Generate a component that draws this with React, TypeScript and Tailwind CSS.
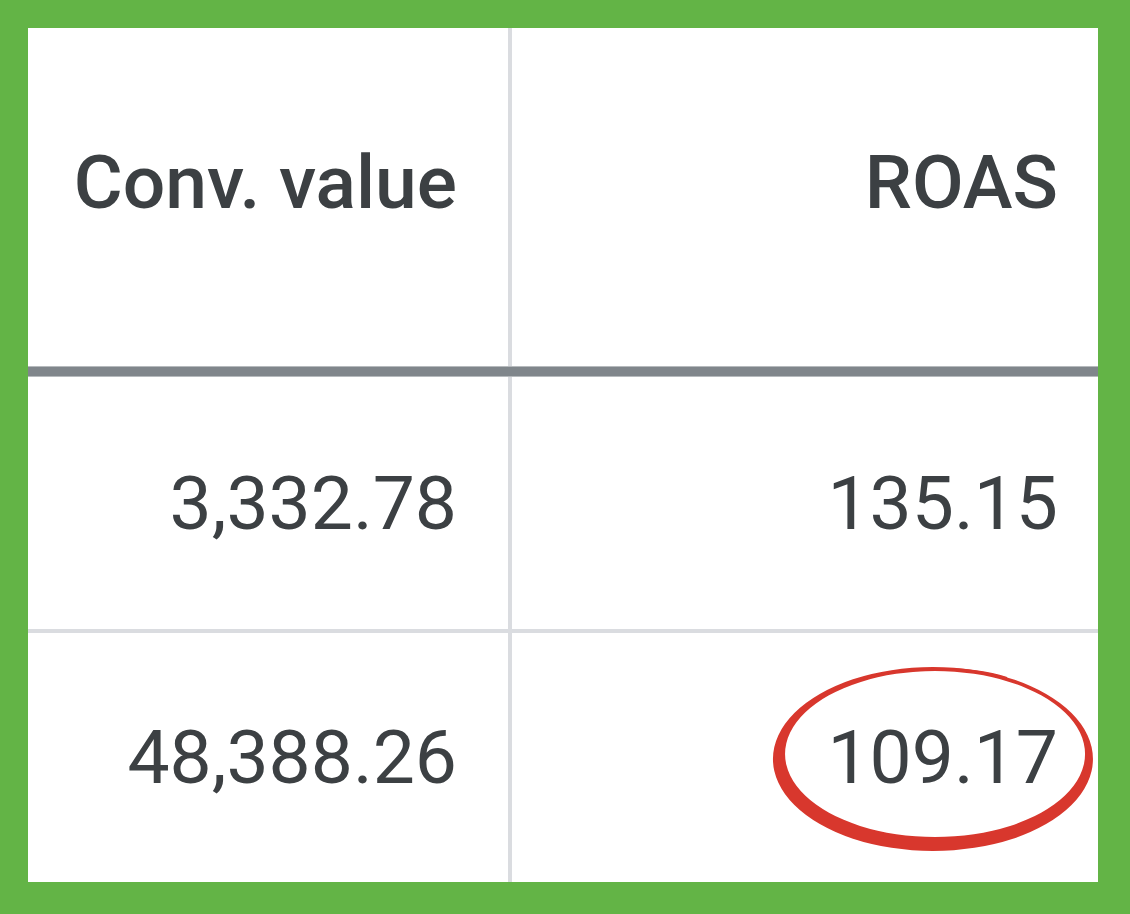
import React from 'react';

const rows = [
  { conv: '3,332.78', roas: '135.15' },
  { conv: '48,388.26', roas: '109.17' },
];

// Hand-drawn red loop around the highlighted ROAS value
const Circle = () => (
  <svg
    className="absolute left-0 top-0 pointer-events-none"
    width="1130"
    height="914"
    viewBox="0 0 1130 914"
  >
    <path
      fillRule="evenodd"
      fill="#d8372d"
      d="M933 667 A160 92 0 1 1 932.9 667 Z M935 671 A150 83 0 1 0 935.1 671 Z"
    />
    <path
      d="M900 671 C 950 667, 985 671, 1006 678"
      stroke="#d8372d"
      strokeWidth="2.5"
      strokeLinecap="round"
      fill="none"
    />
  </svg>
);

const App = () => {
  return (
    <div
      className="relative w-[1130px] h-[914px] bg-[#63b446] pt-[28px] pl-[28px] pr-[32px] pb-[32px]"
      style={{ fontFamily: 'Roboto, "Liberation Sans", sans-serif' }}
    >
      <div className="w-full h-full bg-white flex flex-col text-[#3c4043]">
        {/* header */}
        <div className="flex h-[338px] font-medium text-[75px] leading-none">
          <div className="w-[484px] border-r-4 border-[#dadce0] flex justify-end pr-[51px] pt-[117px]">
            Conv. value
          </div>
          <div className="flex-1 flex justify-end pr-[40px] pt-[117px]">ROAS</div>
        </div>
        <div className="h-[11px] bg-[#80868b] border-y border-[#b6babd]" />

        {rows.map((r, i) => (
          <React.Fragment key={i}>
            <div className={`flex text-[75px] leading-none ${i === 0 ? 'h-[252px]' : 'h-[249px]'}`}>
              <div className="w-[484px] border-r-4 border-[#dadce0] flex items-center justify-end pr-[51px]">
                {r.conv}
              </div>
              <div className="flex-1 flex items-center justify-end pr-[40px]">{r.roas}</div>
            </div>
            {i === 0 && <div className="h-[4px] bg-[#dadce0]" />}
          </React.Fragment>
        ))}
      </div>
      <Circle />
    </div>
  );
};

export default App;
